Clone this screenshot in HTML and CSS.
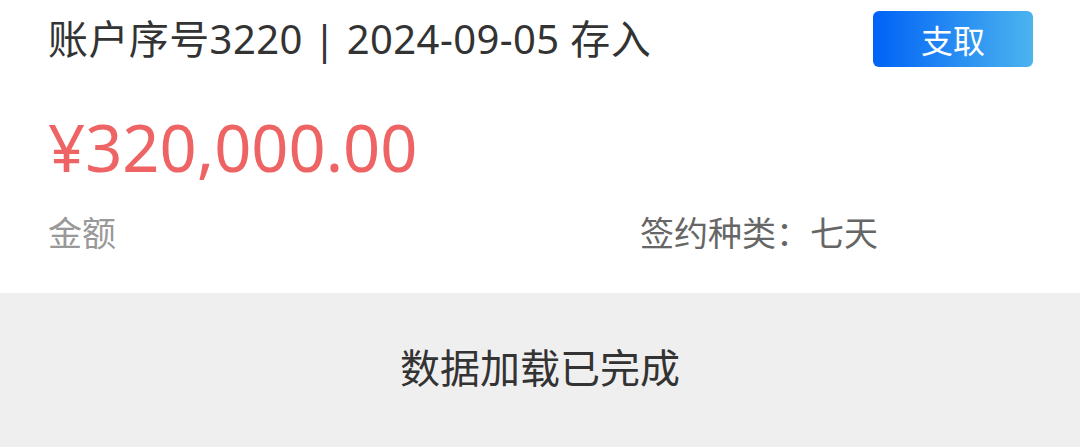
FILE: index.html
```html
<!DOCTYPE html>
<html lang="zh-CN">
<head>
  <meta charset="UTF-8">
  <title>账户详情</title>
  <link rel="stylesheet" href="styles.css">
</head>
<body>
  <div class="card">
    <div class="cardHead">
      <div class="cardTitle">账户序号3220 | 2024-09-05 存入</div>
      <button class="btnDraw">支取</button>
    </div>
    <div class="amount">¥320,000.00</div>
    <div class="meta">
      <div class="metaLabel">金额</div>
      <div class="metaType">签约种类：七天</div>
    </div>
  </div>
  <div class="loadDone">数据加载已完成</div>
</body>
</html>
```
FILE: styles.css
```css
body{
  margin: 0;
  background: #efefef;
  font-family: "Noto Sans", "Noto Sans CJK SC", sans-serif;
}
.card{
  background: #fff;
  height: 293px;
  padding: 11px 47px 0 48px;
  box-sizing: border-box;
}
.cardHead{
  display: flex;
  justify-content: space-between;
  align-items: center;
}
.cardTitle{
  font-size: 40px;
  line-height: 54px;
  letter-spacing: 0.4px;
  color: #333;
}
.btnDraw{
  width: 160px;
  height: 56px;
  border: 0;
  border-radius: 6px;
  background: linear-gradient(90deg, #0062f6, #4bb4ef);
  color: #fff;
  font-family: "Noto Sans CJK SC", sans-serif;
  font-size: 32px;
  padding: 0;
}
.amount{
  margin-top: 40px;
  font-size: 65px;
  line-height: 80px;
  color: #ee6464;
}
.meta{
  display: flex;
  margin-top: 25px;
  font-size: 34px;
  line-height: 40px;
  font-family: "Noto Sans CJK SC", sans-serif;
}
.metaLabel{
  flex: 1;
  color: #999;
}
.metaType{
  width: 393px;
  color: #666;
}
.loadDone{
  height: 154px;
  line-height: 146px;
  text-align: center;
  font-size: 40px;
  color: #333;
  font-family: "Noto Sans CJK SC", sans-serif;
}
```
